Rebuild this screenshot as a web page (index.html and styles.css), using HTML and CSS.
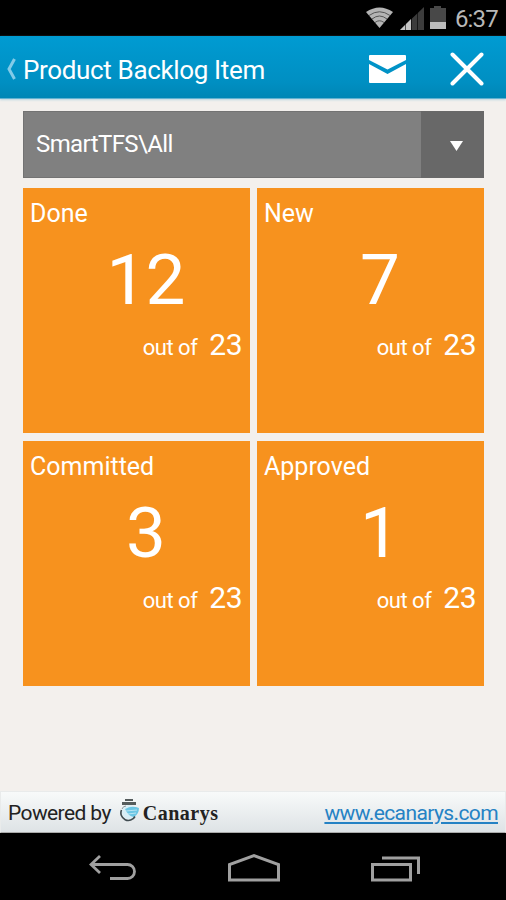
FILE: index.html
```html
<!DOCTYPE html>
<html>
<head>
  <meta charset="utf-8">
  <title>Product Backlog Item</title>
  <link rel="stylesheet" href="styles.css">
</head>
<body>
  <div class="status-bar">
    <svg class="status-icons" width="84" height="32" viewBox="0 0 84 32">
      <!-- wifi -->
      <path d="M1 12 Q14.500 3 28 12 L14.500 28 Z" fill="#b4b4b4"/>
      <path d="M4 15.500 Q14.500 8 25 15.500 M7 19 Q14.500 13 22 19 M10 22.500 Q14.500 19 19 22.500" fill="none" stroke="#555" stroke-width="1"/>
      <!-- signal -->
      <path d="M35 30 L59 7 V30 Z" fill="#3c3c3c"/>
      <path d="M35 30 L46 19 V30 Z" fill="#c4c4c4"/>
      <path d="M40.500 22 V30 M46.500 16 V30 M52.500 10 V30" stroke="#000" stroke-opacity="0.6" stroke-width="1"/>
      <!-- battery -->
      <path d="M69 6 H76 V8 H81 V22 H65 V8 H69 Z" fill="#484848"/>
      <path d="M65 22 H81 V29 H65 Z" fill="#bcbcbc"/>
    </svg>
    <span class="clock">6:37</span>
  </div>

  <div class="header">
    <svg class="back" width="10" height="22" viewBox="0 0 10 22">
      <path d="M8.500 1 L3 11 L8.500 21" fill="none" stroke="#82cbe8" stroke-width="3"/>
    </svg>
    <h1>Product Backlog Item</h1>
    <svg class="mail" width="37" height="28" viewBox="0 0 37 28">
      <path d="M1 0 H36 Q37 0 37 1 V5 L18.500 14.500 L0 5 V1 Q0 0 1 0 Z" fill="#fff"/>
      <path d="M0 9 L18.500 19 L37 9 V27 Q37 28 36 28 H1 Q0 28 0 27 Z" fill="#fff"/>
    </svg>
    <svg class="close" width="34" height="34" viewBox="0 0 34 34">
      <path d="M2.500 2.500 L31.500 31.500 M31.500 2.500 L2.500 31.500" stroke="#fff" stroke-width="4" stroke-linecap="round"/>
    </svg>
  </div>

  <div class="content">
    <div class="dropdown">
      <span class="dropdown-text">SmartTFS\All</span>
      <span class="dropdown-arrow">
        <svg width="13" height="10" viewBox="0 0 13 10"><path d="M0 0 H13 L6.500 10 Z" fill="#fff"/></svg>
      </span>
    </div>

    <div class="tiles">
      <div class="tile">
        <div class="label">Done</div>
        <div class="count">12</div>
        <div class="total">out of <span>23</span></div>
      </div>
      <div class="tile">
        <div class="label">New</div>
        <div class="count">7</div>
        <div class="total">out of <span>23</span></div>
      </div>
      <div class="tile">
        <div class="label">Committed</div>
        <div class="count">3</div>
        <div class="total">out of <span>23</span></div>
      </div>
      <div class="tile">
        <div class="label">Approved</div>
        <div class="count">1</div>
        <div class="total">out of <span>23</span></div>
      </div>
    </div>
  </div>

  <div class="footer">
    <span class="powered">Powered by</span>
    <svg class="logo" width="20" height="24" viewBox="0 0 20 24">
      <path d="M5 1 H13 V3 H5 Z M2 4 H16 V7 H2 Z" fill="#555c5c"/>
      <circle cx="9" cy="14" r="7" fill="#d8eef6"/>
      <path d="M5 11 Q12 7 19 10 Q19 16 14 19 Q8 18 5 11 Z" fill="#6cc6e4"/>
      <path d="M6 13 L17 12 M8 16 L16 15" stroke="#b8e4f2" stroke-width="1"/>
      <path d="M1.500 12 A7.500 7.500 0 0 0 15 18.500" fill="none" stroke="#3f4b50" stroke-width="1.600"/>
      <path d="M2 11 Q3 8 6 8" fill="none" stroke="#8a9598" stroke-width="1"/>
    </svg>
    <span class="brand">Canarys</span>
    <a class="site" href="#">www.ecanarys.com</a>
  </div>

  <div class="nav-bar">
    <svg width="48" height="28" viewBox="0 0 48 28">
      <path d="M11 2 L2 10.500 L11 19 M2 10.500 H38.500 A7 7 0 0 1 38.500 24.500 H21" fill="none" stroke="#a0a0a0" stroke-width="2.800"/>
    </svg>
    <svg width="52" height="28" viewBox="0 0 52 28">
      <path d="M1.500 26 V10.500 L26 1.700 L50.500 10.500 V26 Z" fill="none" stroke="#a0a0a0" stroke-width="3"/>
    </svg>
    <svg width="50" height="28" viewBox="0 0 50 28">
      <path d="M1.500 10.500 H39.500 V26 H1.500 Z M11 4 H47.500 V20" fill="none" stroke="#a0a0a0" stroke-width="3"/>
    </svg>
  </div>
</body>
</html>
```

FILE: styles.css
```css
body {
  margin: 0;
  height: 900px;
  display: flex;
  flex-direction: column;
  font-family: Roboto, "Liberation Sans", sans-serif;
  background-color: #f3f0ed;
  overflow: hidden;
}

svg {
  display: block;
  flex-shrink: 0;
}

.status-bar {
  height: 36px;
  display: flex;
  justify-content: flex-end;
  padding-right: 8px;
  box-sizing: border-box;
  background-color: #000;
}

.status-icons {
  margin-right: 6px;
}

.clock {
  font-size: 24px;
  letter-spacing: -0.8px;
  line-height: 38px;
  color: #b8b8b8;
}

.header {
  height: 63px;
  display: flex;
  align-items: center;
  padding: 4px 22px 0 6px;
  box-sizing: border-box;
  background: linear-gradient(#009bd2, #008fc2 75%, #0086b5);
  border-bottom: 1px solid #62b2d1;
  box-shadow: 0 1px 2px #bcd5e1;
}

h1 {
  flex: 1;
  margin: 0 0 0 7px;
  padding-top: 2px;
  font-size: 26px;
  font-weight: normal;
  letter-spacing: -0.35px;
  color: #fff;
  white-space: nowrap;
}

.mail {
  margin-right: 44px;
}

.content {
  flex: 1;
  padding: 12px 22px 0 23px;
}

.dropdown {
  display: flex;
  height: 67px;
  background-color: #808080;
  box-shadow: inset 0 0 0 1px #737373;
}

.dropdown-text {
  flex: 1;
  padding-left: 13px;
  font-size: 24px;
  letter-spacing: -0.6px;
  line-height: 67px;
  color: #fff;
}

.dropdown-arrow {
  width: 63px;
  display: flex;
  align-items: center;
  justify-content: center;
  padding-left: 7px;
  padding-top: 2px;
  box-sizing: border-box;
  background-color: #686868;
}

.tiles {
  display: grid;
  grid-template-columns: 227px 227px;
  grid-auto-rows: 245px;
  gap: 8px 7px;
  margin-top: 10px;
}

.tile {
  padding: 9px 8px 0 7px;
  background-color: #f7921e;
  color: #fff;
}

.label {
  font-size: 25px;
  line-height: 34px;
}

.count {
  padding-left: 19px;
  font-size: 71px;
  letter-spacing: -1px;
  line-height: 97px;
  text-align: center;
}

.total {
  font-size: 22px;
  letter-spacing: -0.5px;
  line-height: 34px;
  text-align: right;
}

.total span {
  margin-left: 7px;
  font-size: 30px;
}

.footer {
  height: 42px;
  display: flex;
  align-items: center;
  padding: 2px 7px 0;
  box-sizing: border-box;
  background: linear-gradient(#f8fafa, #dee3e6);
  border: 1px solid #e9ebeb;
  border-bottom-color: #aaa;
}

.powered {
  font-size: 21px;
  letter-spacing: -0.6px;
  color: #222;
}

.logo {
  margin: 0 3px 7px 9px;
}

.brand {
  flex: 1;
  font-family: "Liberation Serif", serif;
  font-size: 20px;
  font-weight: bold;
  letter-spacing: 0.5px;
  color: #222;
}

.site {
  font-size: 21px;
  letter-spacing: -0.6px;
  color: #2582c4;
}

.nav-bar {
  height: 67px;
  display: flex;
  align-items: center;
  justify-content: space-between;
  padding: 3px 85px 0 89px;
  box-sizing: border-box;
  background-color: #000;
}
```
